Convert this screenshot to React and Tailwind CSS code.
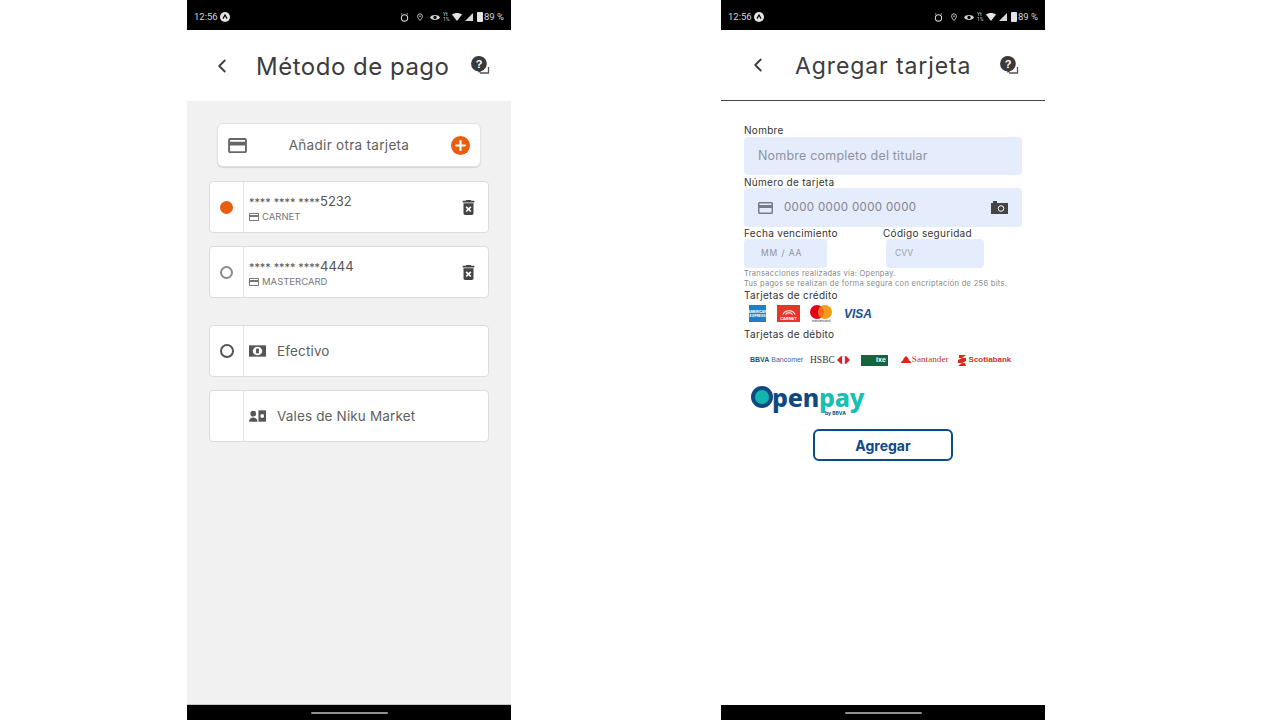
import React from 'react';
import { ChevronLeft, Plus } from 'lucide-react';

const CardIcon = ({ className }) => (
  <svg viewBox="2 4 20 16" className={className} fill="currentColor">
    <path d="M20 4H4c-1.11 0-1.99.89-1.99 2L2 18c0 1.11.89 2 2 2h16c1.11 0 2-.89 2-2V6c0-1.11-.89-2-2-2zm0 14H4v-6h16v6zm0-10H4V6h16v2z" />
  </svg>
);

const TrashIcon = () => (
  <svg viewBox="5 3 14 18" className="w-[13px] h-[15px] text-[#444]" fill="currentColor">
    <path d="M6 19c0 1.1.9 2 2 2h8c1.1 0 2-.9 2-2V7H6v12zm2.46-7.12l1.41-1.41L12 12.59l2.12-2.12 1.41 1.41L13.41 14l2.12 2.12-1.41 1.41L12 15.41l-2.12 2.12-1.41-1.41L10.59 14l-2.13-2.12zM15.5 4l-1-1h-5l-1 1H5v2h14V4z" />
  </svg>
);

const HelpIcon = () => (
  <svg viewBox="0 0 19 19" className="w-[19px] h-[19px]">
    <path d="M9 17h8.500V11" fill="none" stroke="#555" strokeWidth="1.300" />
    <path d="M8 0a7.700 7.700 0 0 1 2.500 15L7.500 17v-1.600A7.700 7.700 0 0 1 8 0z" fill="#3a3a3a" />
    <text x="8" y="12" textAnchor="middle" fontSize="11" fontWeight="800" fill="#fff" fontFamily="Liberation Sans">?</text>
  </svg>
);

const StatusBar = ({ time, battery }) => (
  <div className="h-[30px] bg-black flex items-center pt-[4px] pl-[7px] pr-[8px] text-[#d6d6d6] text-[10px] font-['Roboto',sans-serif] shrink-0">
    <span className="text-[9.5px] w-[21px] whitespace-nowrap">{time}</span>
    <span className="ml-[5px] w-[10px] h-[10px] rounded-full bg-[#e4e4e4] flex items-center justify-center">
      <svg viewBox="0 0 10 10" className="w-[8px] h-[8px]"><path d="M2.500 7L5 2.500 7.500 7" fill="none" stroke="#000" strokeWidth="1.500" /></svg>
    </span>
    <div className="ml-auto flex items-center">
      <svg viewBox="0 0 10 10" className="w-[9px] h-[9px]"><circle cx="5" cy="5.500" r="3.500" fill="none" stroke="#d6d6d6" strokeWidth="1.200" /><path d="M1 1.500L2.500 .5M9 1.500L7.500 .5" stroke="#d6d6d6" /></svg>
      <svg viewBox="0 0 10 10" className="w-[8px] h-[10px] ml-[7px]"><path d="M5 9.500C3 7 2 5.500 2 4a3 3 0 0 1 6 0c0 1.500-1 3-3 5.500z" fill="none" stroke="#d6d6d6" strokeWidth="1.100" /><circle cx="5" cy="4" r="1" fill="#d6d6d6" /></svg>
      <svg viewBox="0 0 12 10" className="w-[10px] h-[9px] ml-[6px]"><path d="M0 5c1.500-4 10.500-4 12 0-1.500 4-10.500 4-12 0z" fill="#d6d6d6" /><circle cx="6" cy="5" r="2" fill="#000" /></svg>
      <span className="text-[5px] leading-[5px] w-[8px] ml-[3px]">Yt<br />1%</span>
      <svg viewBox="0 0 10 8" className="w-[10px] h-[8px] ml-[1px]"><path d="M0 1.500C3-.5 7-.5 10 1.500L5 8z" fill="#e4e4e4" /></svg>
      <svg viewBox="0 0 8 8" className="w-[8px] h-[8px] ml-[3px]"><path d="M8 0v8H0z" fill="#d6d6d6" /></svg>
      <span className="w-[6px] h-[10px] ml-[4px] rounded-[1px] bg-[#e4e4e4]" />
      <span className="ml-[1px] w-[19px] whitespace-nowrap text-[9.5px]">{battery}</span>
    </div>
  </div>
);

const NavBar = () => (
  <div className="h-[15px] bg-black flex items-center justify-center shrink-0">
    <span className="w-[77px] h-[2px] rounded bg-[#8f8f8f]" />
  </div>
);

const Header = ({ title, back, iconRight, bordered, titleClass }) => (
  <div className={`h-[71px] bg-white flex items-center shrink-0 ${bordered ? 'border-b border-[#444]' : ''}`}>
    <ChevronLeft className={`w-[22px] h-[22px] text-[#3c3c3c] ${back}`} strokeWidth={2} />
    <h1 className={`text-[#3c3c3c] whitespace-nowrap pt-[2px] ${titleClass}`}>{title}</h1>
    <div className={`ml-auto ${iconRight}`}><HelpIcon /></div>
  </div>
);

const Radio = ({ type }) => {
  if (type === 'on') return <span className="w-[13px] h-[13px] rounded-full bg-[#e95d0f]" />;
  if (type === 'off') return <span className="w-[13px] h-[13px] rounded-full border-2 border-[#8a8a8a]" />;
  if (type === 'dark') return <span className="w-[14px] h-[14px] rounded-full border-2 border-[#555]" />;
  return null;
};

const Row = ({ radio, children }) => (
  <div className="h-[52px] w-[280px] ml-[22px] bg-white border border-[#dcdcdc] rounded-[4px] flex items-stretch">
    <div className="w-[34px] border-r border-[#e2e2e2] flex items-center justify-center shrink-0">
      <Radio type={radio} />
    </div>
    <div className="flex-1 flex items-center pl-[5px] pr-[13px]">{children}</div>
  </div>
);

const SavedCard = ({ last, brand, radio }) => (
  <Row radio={radio}>
    <div className="flex-1 pt-[1px]">
      <p className="leading-[16px] text-[#555] whitespace-nowrap flex items-baseline">
        <span className="text-[10.8px] w-[71px]">**** **** ****</span>
        <span className="text-[13px]">{last}</span>
      </p>
      <div className="flex items-center gap-[3px] text-[#777]">
        <CardIcon className="w-[10px] h-[8px]" />
        <span className="text-[9.5px] leading-[12px]">{brand}</span>
      </div>
    </div>
    <TrashIcon />
  </Row>
);

const MetodoPago = () => (
  <div className="w-[324px] h-[720px] flex flex-col">
    <StatusBar time="12:56" battery="89 %" />
    <Header title="Método de pago" back="ml-[24px]" iconRight="mr-[21px]" titleClass="ml-[23px] text-[24px] tracking-[0.5px]" />
    <div className="flex-1 bg-[#f1f1f1] pt-[22px]">
      <div className="w-[264px] h-[44px] ml-[30px] bg-white rounded-[6px] border border-[#e2e2e2] shadow-[0_1px_1px_rgba(0,0,0,0.12)] flex items-center pl-[10px] pr-[10px]">
        <CardIcon className="w-[19px] h-[15px] text-[#666]" />
        <span className="flex-1 text-center text-[13.5px] text-[#5f5f5f] tracking-[0.3px] pt-[1px]">Añadir otra tarjeta</span>
        <span className="w-[19px] h-[19px] rounded-full bg-[#e95d0f] flex items-center justify-center">
          <Plus className="w-[15px] h-[15px] text-white" strokeWidth={3.5} />
        </span>
      </div>
      <div className="mt-[14px] flex flex-col gap-[13px]">
        <SavedCard last="5232" brand="CARNET" radio="on" />
        <SavedCard last="4444" brand="MASTERCARD" radio="off" />
      </div>
      <div className="mt-[27px] flex flex-col gap-[13px]">
        <Row radio="dark">
          <svg viewBox="0 0 18 12" className="w-[17px] h-[12px] text-[#555]">
            <path d="M0 0h18v12H0z" fill="currentColor" />
            <ellipse cx="9" cy="6" rx="5" ry="4.500" fill="#fff" />
            <rect x="7.500" y="3.500" width="3" height="5" fill="currentColor" />
          </svg>
          <span className="ml-[11px] text-[13.5px] text-[#5f5f5f] tracking-[0.15px]">Efectivo</span>
        </Row>
        <Row>
          <svg viewBox="0 0 18 12" className="w-[17px] h-[12px] text-[#555]">
            <circle cx="4.500" cy="3.500" r="3" fill="currentColor" />
            <path d="M0 12c0-6 9-6 9 0z" fill="currentColor" />
            <rect x="10" y="0" width="8" height="12" fill="currentColor" />
            <circle cx="14" cy="6" r="2" fill="#fff" />
          </svg>
          <span className="ml-[11px] text-[13.5px] text-[#5f5f5f] tracking-[0.15px]">Vales de Niku Market</span>
        </Row>
      </div>
    </div>
    <div className="h-px bg-[#c8c8c8]" />
    <NavBar />
  </div>
);

const Label = ({ children, className = '' }) => (
  <p className={`text-[10px] leading-[12px] text-[#333] tracking-[0.3px] whitespace-nowrap ${className}`}>{children}</p>
);

const Amex = () => (
  <span className="w-[17px] h-[17px] bg-[#1f7fc4] flex items-center justify-center text-white text-[3.5px] font-bold leading-[4px] text-center">AMERICAN<br />EXPRESS</span>
);

const Carnet = () => (
  <span className="w-[23px] h-[17px] bg-[#e8352a] flex flex-col items-center justify-end pb-[1px]">
    <svg viewBox="0 0 16 7" className="w-[14px] h-[7px] mb-[1px]"><path d="M1 6C3 0 13 0 15 6M4 6C5 3 11 3 12 6" fill="none" stroke="#fff" strokeWidth="1.200" /></svg>
    <span className="text-white text-[4px] leading-[4px] font-bold">CARNET</span>
  </span>
);

const Mastercard = () => (
  <span className="w-[22px] flex flex-col items-center">
    <svg viewBox="0 0 22 14" className="w-[22px] h-[14px]">
      <circle cx="7" cy="7" r="7" fill="#e3001b" />
      <circle cx="15" cy="7" r="7" fill="#f59c1a" />
      <path d="M11 1.300a7 7 0 0 1 0 11.400a7 7 0 0 1 0-11.400z" fill="#f26a1b" />
    </svg>
    <span className="text-[3.5px] leading-[4px] text-[#333]">mastercard</span>
  </span>
);

const AgregarTarjeta = () => (
  <div className="w-[324px] h-[720px] flex flex-col bg-white">
    <StatusBar time="12:56" battery="89 %" />
    <Header title="Agregar tarjeta" back="ml-[26px]" iconRight="mr-[26px]" titleClass="ml-[26px] text-[23px] tracking-[0.9px]" bordered />
    <div className="flex-1 pl-[23px] pt-[23px]">
      <Label>Nombre</Label>
      <div className="mt-[1px] w-[278px] h-[38px] bg-[#e5ecfb] rounded-[4px] flex items-center pt-[1px] pl-[14px] text-[12.5px] text-[#8d93a0] tracking-[0.2px]">
        Nombre completo del titular
      </div>
      <Label className="mt-[1px]">Número de tarjeta</Label>
      <div className="w-[278px] h-[39px] bg-[#e5ecfb] rounded-[4px] flex items-center pl-[14px] pr-[14px]">
        <CardIcon className="w-[15px] h-[12px] text-[#777d88]" />
        <span className="ml-[11px] text-[11.5px] text-[#7f8591] tracking-[0.35px] pt-[1px]">0000 0000 0000 0000</span>
        <svg viewBox="0 0 17 13" className="ml-auto w-[17px] h-[13px]">
          <path d="M0 2h2V0h4v2h11v11H0z" fill="#444" />
          <circle cx="10" cy="7.500" r="2.800" fill="none" stroke="#fff" strokeWidth="1" />
        </svg>
      </div>
      <div className="flex">
        <div className="w-[139px]">
          <Label>Fecha vencimiento</Label>
          <div className="w-[83px] h-[29px] bg-[#e5ecfb] rounded-[4px] flex items-center pl-[17px] text-[8.5px] text-[#8d93a0] tracking-[0.9px]">MM / AA</div>
        </div>
        <div>
          <Label>Código seguridad</Label>
          <div className="ml-[3px] w-[98px] h-[29px] bg-[#e5ecfb] rounded-[4px] flex items-center pl-[9px] text-[8.5px] text-[#9aa0ac]">CVV</div>
        </div>
      </div>
      <p className="mt-[1px] text-[7.5px] leading-[10px] text-[#888] tracking-[0.3px] whitespace-nowrap">Transacciones realizadas vía: Openpay.</p>
      <p className="text-[7.5px] leading-[10px] text-[#888] tracking-[0.3px] whitespace-nowrap">Tus pagos se realizan de forma segura con encriptación de 256 bits.</p>
      <Label>Tarjetas de crédito</Label>
      <div className="flex items-center mt-[3px] ml-[5px] h-[19px]">
        <Amex />
        <span className="ml-[11px]"><Carnet /></span>
        <span className="ml-[10px]"><Mastercard /></span>
        <span className="ml-[12px] text-[12px] font-extrabold italic text-[#1a4f8f] font-['Liberation_Sans',sans-serif]">VISA</span>
      </div>
      <Label className="mt-[5px]">Tarjetas de débito</Label>
      <div className="flex items-center mt-[14px] ml-[6px] h-[12px] whitespace-nowrap">
        <span className="text-[7px] w-[53px] font-['Liberation_Sans',sans-serif]"><b className="text-[#1d4f91]">BBVA</b> <span className="text-[#44679a]">Bancomer</span></span>
        <span className="ml-[7px] text-[9.5px] text-[#333] font-['Liberation_Serif',serif]">HSBC</span>
        <svg viewBox="0 0 14 8" className="ml-[2px] w-[13px] h-[8px]"><path d="M0 4l4-4h6l4 4-4 4H4z" fill="#d8232a" /><path d="M5.500 0h3v8h-3z" fill="#fff" /></svg>
        <span className="ml-[11px] w-[27px] h-[11px] bg-[#14653c] text-white text-[7px] font-bold flex items-center justify-end pr-[2px] font-['Liberation_Sans',sans-serif]">ixe</span>
        <svg viewBox="0 0 10 9" className="ml-[13px] w-[10px] h-[9px]"><path d="M5 0c2 2 3 3 3 4.500 1 0 2 1 2 2.500H0c0-1.500 1-2.500 2-2.500C2 3 3 2 5 0z" fill="#e3231b" /></svg>
        <span className="ml-[1px] text-[9.2px] text-[#d3322b] font-['Liberation_Serif',serif]">Santander</span>
        <svg viewBox="0 0 8 11" className="ml-[9px] w-[8px] h-[11px]"><path d="M1 0h7L4 3h4v3L4 8h3l1 3H0l4-3H0V5l4-2H1z" fill="#e0251b" /></svg>
        <span className="ml-[3px] text-[8px] font-bold text-[#d9302a] font-['Liberation_Sans',sans-serif]">Scotiabank</span>
      </div>
      <div className="relative mt-[20px] ml-[7px] h-[32px] flex items-start">
        <span className="w-[22px] h-[22px] rounded-full border-[4px] border-[#0e4a7f] bg-[#12b5b0] -mr-[1px] shrink-0" />
        <span className="text-[25px] leading-[22px] font-extrabold text-[#0e4a7f] tracking-[-0.2px] font-['Noto_Sans',sans-serif]">pen</span>
        <span className="text-[25px] leading-[22px] font-extrabold text-[#18bfb5] tracking-[-0.2px] font-['Noto_Sans',sans-serif]">pay</span>
        <span className="absolute left-[74px] top-[24px] text-[5px] leading-[6px] font-bold text-[#0e4a7f]">by BBVA</span>
      </div>
      <button className="mt-[11px] ml-[69px] w-[140px] h-[32px] border-2 border-[#0b4a8b] rounded-[6px] text-[14px] font-bold text-[#0b4a8b] flex items-center justify-center">
        Agregar
      </button>
    </div>
    <NavBar />
  </div>
);

const App = () => (
  <div className="w-[1280px] h-[720px] bg-white overflow-hidden flex pl-[187px] gap-[210px] font-['Inter',sans-serif]">
    <MetodoPago />
    <AgregarTarjeta />
  </div>
);

export default App;
